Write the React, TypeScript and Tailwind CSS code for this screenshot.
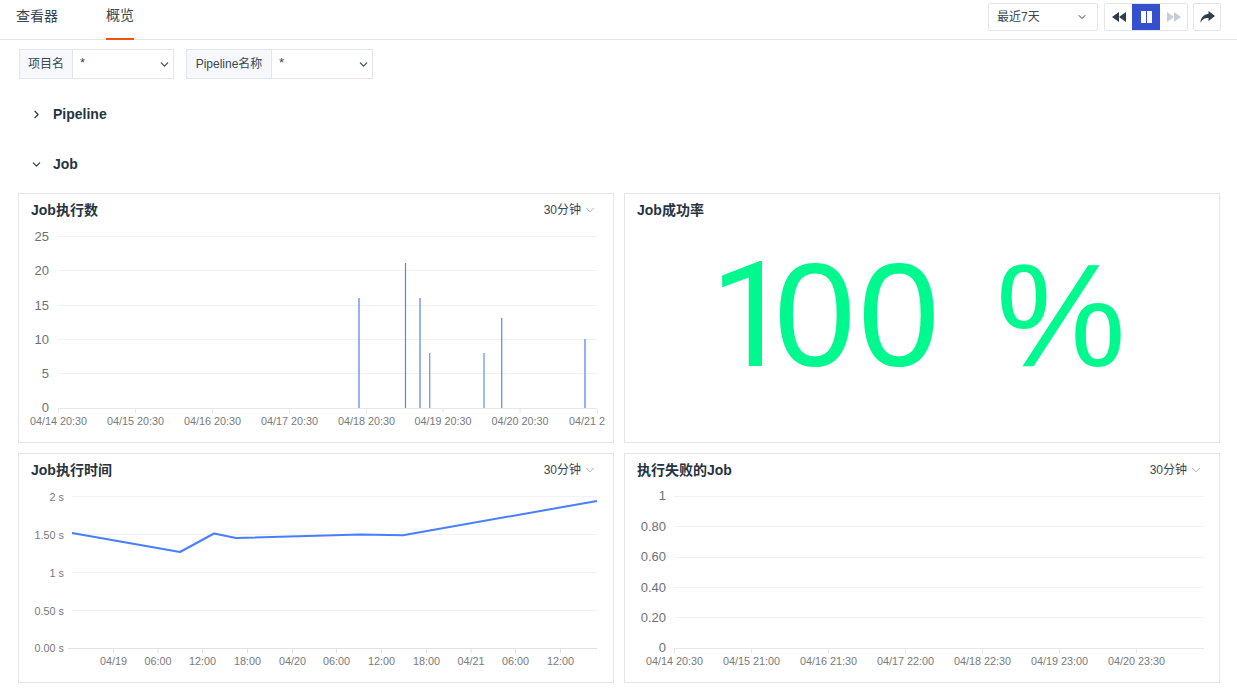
import { ChevronDown, ChevronRight } from "lucide-react"

const font = "font-['Liberation_Sans','Noto_Sans_CJK_SC',sans-serif]"

function Filter({ label, labelWidth, width }: { label: string; labelWidth: string; width: string }) {
  return (
    <div className={`flex h-[30px] border border-[#e2e5ec] ${width}`}>
      <div className={`flex shrink-0 items-center justify-center border-r border-[#e2e5ec] bg-[#f6f8fb] text-xs text-[#3a4652] ${labelWidth}`}>
        {label}
      </div>
      <div className="flex flex-1 items-center justify-between pl-[7px] pr-[2px] text-[13px] text-[#3a4652]">
        <span className="pb-[2px]">*</span>
        <ChevronDown size={13} strokeWidth={2} className="text-[#3a4652]" />
      </div>
    </div>
  )
}

function CardHeader({ title, interval }: { title: string; interval?: boolean }) {
  return (
    <div className="flex h-[32px] items-center justify-between pb-[1px] pl-3 pr-4">
      <span className="text-sm font-bold text-[#26343f]">{title}</span>
      {interval && (
        <span className="flex items-center gap-[2px] text-xs text-[#3a4652]">
          30分钟
          <ChevronDown size={14} strokeWidth={1.5} className="text-[#9aa3ad]" />
        </span>
      )}
    </div>
  )
}

function RewindIcon({ flip }: { flip?: boolean }) {
  return (
    <svg width={14} height={10} viewBox="0 0 14 10" fill="currentColor" className={flip ? "rotate-180" : ""}>
      <polygon points="0,5 7,0 7,10" />
      <polygon points="7,5 14,0 14,10" />
    </svg>
  )
}

function ShareIcon() {
  return (
    <svg width={15} height={12} viewBox="0 0 15 12" fill="currentColor">
      <path d="M8.5 0 L15 5 L8.5 10 L8.5 7 C4.5 7 2.2 8.3 0.4 12 C0.6 7 3.5 3.4 8.5 3 Z" />
    </svg>
  )
}

// chart coords below are page coords minus the svg's offset
const jobBars = [
  { x: 359, top: 298, w: 1.6, c: "#7f9ff6" },
  { x: 405.5, top: 263, w: 1.2, c: "#5f84ee" },
  { x: 420, top: 298, w: 1.6, c: "#7f9ff6" },
  { x: 429.7, top: 353, w: 1.2, c: "#6a8ef2" },
  { x: 484, top: 353, w: 1.6, c: "#8aa8f8" },
  { x: 501.7, top: 318, w: 1.3, c: "#6b8ef0" },
  { x: 585, top: 339, w: 1.8, c: "#8aa8f8" },
]

function JobCountChart() {
  const ox = 19
  const oy = 226
  const grid = [236.5, 270.5, 305.5, 339.5, 373.5]
  const ticks = [58, 135, 212, 289, 366, 442.5, 519.5, 597]
  const labels = ["04/14 20:30", "04/15 20:30", "04/16 20:30", "04/17 20:30", "04/18 20:30", "04/19 20:30", "04/20 20:30", "04/21 20:30"]
  const yLabels = ["25", "20", "15", "10", "5", "0"]
  return (
    <svg width={586} height={216} className="block">
      {grid.map((y) => (
        <line key={y} x1={58 - ox} x2={597 - ox} y1={y - oy} y2={y - oy} stroke="#f1f2f4" />
      ))}
      <line x1={58 - ox} x2={597 - ox} y1={408.5 - oy} y2={408.5 - oy} stroke="#e6e8eb" />
      {ticks.map((x, i) => (
        <g key={x}>
          <line x1={x - ox + 0.5} x2={x - ox + 0.5} y1={408.5 - oy} y2={413 - oy} stroke="#e6e8eb" />
          <text x={x - ox + 0.5} y={425 - oy} textAnchor="middle" fontSize={10.8} fill="#77797d">
            {labels[i]}
          </text>
        </g>
      ))}
      {[236, 270.5, 305, 339.5, 373, 407.5].map((y, i) => (
        <text key={y} x={49 - ox} y={y - oy + 4.5} textAnchor="end" fontSize={13} fill="#6e7074">
          {yLabels[i]}
        </text>
      ))}
      {jobBars.map((b) => (
        <rect key={b.x} x={b.x - ox - b.w / 2} y={b.top - oy} width={b.w} height={408 - b.top} fill={b.c} />
      ))}
    </svg>
  )
}

function JobTimeChart() {
  const ox = 19
  const oy = 486
  const grid = [496.5, 534.5, 572.5, 610.5]
  const ticks = [113, 157.5, 202, 247, 292, 336, 381, 426, 470.5, 515, 560]
  const labels = ["04/19", "06:00", "12:00", "18:00", "04/20", "06:00", "12:00", "18:00", "04/21", "06:00", "12:00"]
  const yLabels = ["2 s", "1.50 s", "1 s", "0.50 s", "0.00 s"]
  const points = [
    [72, 533],
    [180, 552],
    [214, 533.5],
    [236, 538],
    [360, 534.6],
    [403, 535.2],
    [597, 501],
  ]
    .map(([x, y]) => `${x - ox},${y - oy}`)
    .join(" ")
  return (
    <svg width={594} height={196} className="block">
      {grid.map((y) => (
        <line key={y} x1={72 - ox} x2={597 - ox} y1={y - oy} y2={y - oy} stroke="#f1f2f4" />
      ))}
      <line x1={68 - ox} x2={597 - ox} y1={648.5 - oy} y2={648.5 - oy} stroke="#dfe1e5" />
      {ticks.map((x, i) => (
        <g key={x}>
          <line x1={x - ox + 0.5} x2={x - ox + 0.5} y1={648.5 - oy} y2={653 - oy} stroke="#dfe1e5" />
          <text x={x - ox + 0.5} y={665 - oy} textAnchor="middle" fontSize={10.8} fill="#77797d">
            {labels[i]}
          </text>
        </g>
      ))}
      {[496.5, 534.5, 572.5, 610.5, 648].map((y, i) => (
        <text key={y} x={64 - ox} y={y - oy + 4} textAnchor="end" fontSize={10.8} fill="#77797d">
          {yLabels[i]}
        </text>
      ))}
      <polyline points={points} fill="none" stroke="#4a7dff" strokeWidth={2} strokeLinejoin="round" />
    </svg>
  )
}

function FailedJobChart() {
  const ox = 625
  const oy = 486
  const grid = [496.5, 526.5, 557.5, 587.5, 617.5]
  const ticks = [674, 751, 828, 905, 982, 1059, 1136]
  const labels = ["04/14 20:30", "04/15 21:00", "04/16 21:30", "04/17 22:00", "04/18 22:30", "04/19 23:00", "04/20 23:30"]
  const yLabels = ["1", "0.80", "0.60", "0.40", "0.20", "0"]
  return (
    <svg width={594} height={196} className="block">
      {grid.map((y) => (
        <line key={y} x1={674 - ox} x2={1204 - ox} y1={y - oy} y2={y - oy} stroke="#f1f2f4" />
      ))}
      <line x1={674 - ox} x2={1204 - ox} y1={648.5 - oy} y2={648.5 - oy} stroke="#e6e8eb" />
      {ticks.map((x, i) => (
        <g key={x}>
          <line x1={x - ox + 0.5} x2={x - ox + 0.5} y1={648.5 - oy} y2={653 - oy} stroke="#e6e8eb" />
          <text x={x - ox + 0.5} y={665 - oy} textAnchor="middle" fontSize={10.8} fill="#77797d">
            {labels[i]}
          </text>
        </g>
      ))}
      {[495.5, 526, 556.5, 587.5, 617.5, 647.5].map((y, i) => (
        <text key={y} x={666 - ox} y={y - oy + 4.5} textAnchor="end" fontSize={13} fill="#6e7074">
          {yLabels[i]}
        </text>
      ))}
    </svg>
  )
}

export default function App() {
  return (
    <div className={`h-[693px] w-[1237px] overflow-hidden bg-white ${font}`}>
      {/* top bar */}
      <header className="flex h-10 items-start justify-between border-b border-[#e4e6ea] pl-4 pr-4">
        <nav className="flex h-full gap-12 text-sm text-[#3a4652]">
          <div className="flex h-[39px] items-center pb-2">查看器</div>
          <div className="flex h-10 items-center border-b-2 border-[#f2500e] pb-2">概览</div>
        </nav>
        <div className="flex items-center pt-[3px]">
          <div className="flex h-7 w-[110px] items-center justify-between rounded-[2px] border border-[#e2e5ec] pl-2 pr-[9px] text-xs text-[#3a4652]">
            最近7天
            <ChevronDown size={12} strokeWidth={2} />
          </div>
          <div className="ml-[6px] flex h-7 rounded-[2px] border border-[#e2e5ec]">
            <div className="flex w-[27px] items-center justify-center text-[#2f3d4a]">
              <RewindIcon />
            </div>
            <div className="flex w-7 items-center justify-center gap-[1px] bg-[#3450cf]">
              <span className="h-3 w-[5px] bg-white" />
              <span className="h-3 w-[5px] bg-white" />
            </div>
            <div className="flex w-[27px] items-center justify-center text-[#c8ccd6]">
              <RewindIcon flip />
            </div>
          </div>
          <div className="ml-[5px] flex h-7 w-7 items-center justify-center rounded-[2px] border border-[#e2e5ec] text-[#2f3d4a]">
            <ShareIcon />
          </div>
        </div>
      </header>

      {/* filters */}
      <div className="flex gap-3 pl-[19px] pt-[9px]">
        <Filter label="项目名" labelWidth="w-[53px]" width="w-[155px]" />
        <Filter label="Pipeline名称" labelWidth="w-[85px]" width="w-[187px]" />
      </div>

      {/* sections */}
      <div className="mt-[10px] flex h-[50px] items-center pl-[30px] text-sm font-bold text-[#26343f]">
        <ChevronRight size={13} strokeWidth={2} className="mr-[10px]" />
        Pipeline
      </div>
      <div className="flex h-[50px] items-center pl-[30px] text-sm font-bold text-[#26343f]">
        <ChevronDown size={13} strokeWidth={2} className="mr-[10px]" />
        Job
      </div>

      {/* panels */}
      <div className="ml-[18px] mt-1 grid w-[1202px] grid-cols-2 grid-rows-[250px_230px] gap-[10px]">
        <div className="border border-[#e4e6ea]">
          <CardHeader title="Job执行数" interval />
          <JobCountChart />
        </div>
        <div className="flex flex-col border border-[#e4e6ea]">
          <CardHeader title="Job成功率" />
          <div className="flex flex-1 items-center justify-center pb-[36px] pr-[8px] text-[146px] leading-none text-[#00f98f]">
            <div className="whitespace-pre">
              {/* liberation's 1 has a foot, the reference's does not */}
              <span className="-mr-[18px] font-['Roboto',sans-serif]">1</span>
              <span className="tracking-[3px]">00 </span>
              <span className="ml-[10px]">%</span>
            </div>
          </div>
        </div>
        <div className="border border-[#e4e6ea]">
          <CardHeader title="Job执行时间" interval />
          <JobTimeChart />
        </div>
        <div className="border border-[#e4e6ea]">
          <CardHeader title="执行失败的Job" interval />
          <FailedJobChart />
        </div>
      </div>
    </div>
  )
}
